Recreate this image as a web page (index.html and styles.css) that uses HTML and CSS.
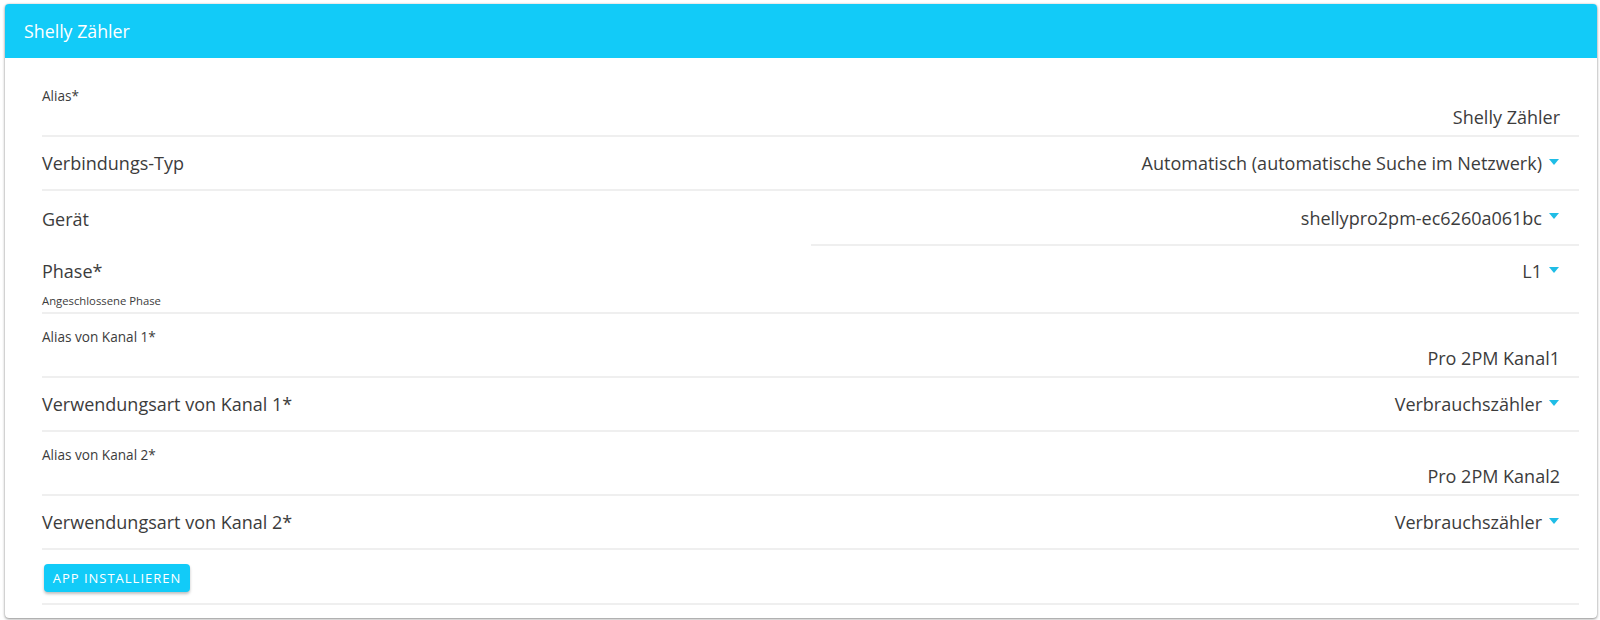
FILE: index.html
```html
<!DOCTYPE html>
<html lang="de">
<head>
<meta charset="utf-8">
<title>Shelly Zähler</title>
<link rel="stylesheet" href="styles.css">
</head>
<body>
<div class="card">
  <div class="card-header">Shelly Zähler</div>
  <div class="card-body">
    <div class="row text-row first">
      <div class="small-label">Alias*</div>
      <div class="value">Shelly Zähler</div>
    </div>
    <div class="row select-row">
      <div class="big-label">Verbindungs-Typ</div>
      <div class="select">Automatisch (automatische Suche im Netzwerk)<span class="arrow"></span></div>
    </div>
    <div class="row split-row">
      <div class="big-label">Gerät</div>
      <div class="select split-select">shellypro2pm-ec6260a061bc<span class="arrow"></span></div>
    </div>
    <div class="row phase-row">
      <div class="phase-top">
        <div class="big-label">Phase*</div>
        <div class="select">L1<span class="arrow"></span></div>
      </div>
      <div class="helper">Angeschlossene Phase</div>
    </div>
    <div class="row text-row">
      <div class="small-label">Alias von Kanal 1*</div>
      <div class="value">Pro 2PM Kanal1</div>
    </div>
    <div class="row select-row">
      <div class="big-label">Verwendungsart von Kanal 1*</div>
      <div class="select">Verbrauchszähler<span class="arrow"></span></div>
    </div>
    <div class="row text-row">
      <div class="small-label">Alias von Kanal 2*</div>
      <div class="value">Pro 2PM Kanal2</div>
    </div>
    <div class="row select-row">
      <div class="big-label">Verwendungsart von Kanal 2*</div>
      <div class="select">Verbrauchszähler<span class="arrow"></span></div>
    </div>
    <div class="row button-row">
      <button class="btn">APP INSTALLIEREN</button>
    </div>
  </div>
</div>
</body>
</html>
```
FILE: styles.css
```css
html, body {
  margin: 0;
  padding: 0;
  background: #ffffff;
}
body {
  font-family: "Open Sans", "Liberation Sans", sans-serif;
  color: #3c3c3c;
  padding: 4px 3px 4px 5px;
}
.card {
  background: #fff;
  border-radius: 4px;
  box-shadow: 0 1px 3px rgba(0,0,0,0.45), 0 0 1px rgba(0,0,0,0.2);
  overflow: hidden;
}
.card-header {
  height: 54px;
  background: #12cbf8;
  color: #fff;
  font-size: 17.8px;
  line-height: 54px;
  padding-left: 19px;
}
.card-body {
  padding: 0 18px 13px 37px;
}
.row {
  border-bottom: 2px solid #efefef;
  box-sizing: border-box;
}
.text-row {
  display: flex;
  flex-direction: column;
  height: 64px;
  padding-top: 14px;
}
.text-row.first {
  height: 79px;
  padding-top: 29px;
}
.small-label {
  font-size: 13.6px;
  line-height: 18px;
}
.value {
  text-align: right;
  font-size: 18px;
  line-height: 24px;
  padding-right: 19px;
  margin-top: 0;
}
.select-row {
  display: flex;
  align-items: center;
  justify-content: space-between;
  height: 54px;
}
.big-label {
  font-size: 18px;
  line-height: 24px;
}
.select {
  font-size: 18px;
  line-height: 24px;
  display: flex;
  align-items: center;
  padding-right: 20px;
}
.arrow {
  width: 0;
  height: 0;
  border-left: 5px solid transparent;
  border-right: 5px solid transparent;
  border-top: 6px solid #1fbde6;
  margin-left: 7px;
  margin-top: -3px;
}
.split-row {
  display: grid;
  grid-template-columns: 1fr 1fr;
  border-bottom: none;
  height: 55px;
}
.split-row .big-label {
  align-self: center;
}
.split-select {
  justify-content: flex-end;
  border-bottom: 2px solid #efefef;
}
.phase-row {
  height: 68px;
  padding-top: 13px;
}
.phase-top {
  display: flex;
  justify-content: space-between;
  align-items: center;
}
.helper {
  font-size: 11.3px;
  line-height: 16px;
  margin-top: 10px;
}
.button-row {
  height: 55px;
  padding-top: 14px;
}
.btn {
  font-family: "Open Sans", "Liberation Sans", sans-serif;
  background: #12cbf8;
  color: #fff;
  border: none;
  border-radius: 4px;
  height: 28px;
  width: 146px;
  margin-left: 2px;
  font-size: 13px;
  letter-spacing: 1px;
  padding: 0;
  box-shadow: 0 2px 3px rgba(0,0,0,0.25);
}
```
